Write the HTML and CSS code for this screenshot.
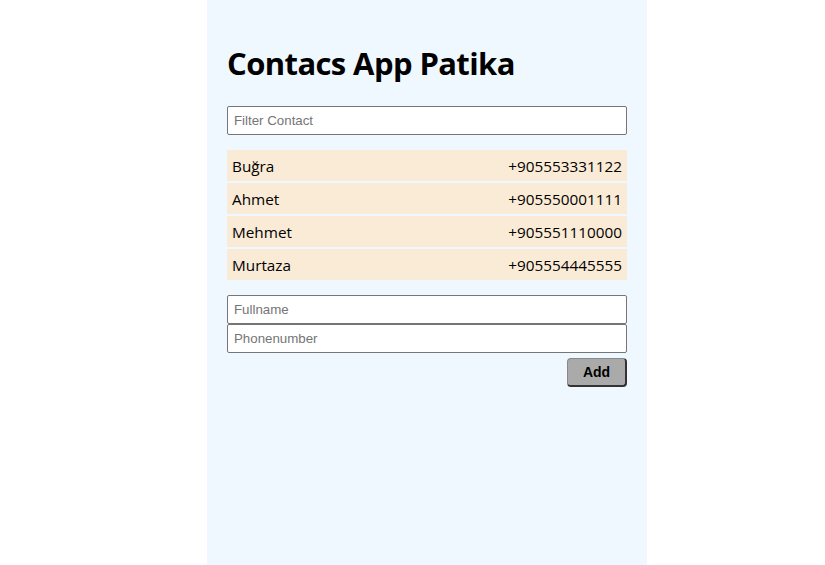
FILE: index.html
```html
<!DOCTYPE html>
<html lang="tr">
<head>
<meta charset="utf-8">
<title>Contacs App Patika</title>
<link rel="stylesheet" href="styles.css">
</head>
<body>
<div class="container">
  <h1 class="title">Contacs App Patika</h1>
  <input class="field filter" type="text" placeholder="Filter Contact">
  <ul class="list">
    <li class="item"><span>Buğra</span><span>+905553331122</span></li>
    <li class="item"><span>Ahmet</span><span>+905550001111</span></li>
    <li class="item"><span>Mehmet</span><span>+905551110000</span></li>
    <li class="item"><span>Murtaza</span><span>+905554445555</span></li>
  </ul>
  <form class="form">
    <input class="field" type="text" placeholder="Fullname">
    <input class="field" type="text" placeholder="Phonenumber">
    <div class="actions"><button class="btn" type="button">Add</button></div>
  </form>
</div>
</body>
</html>
```
FILE: styles.css
```css
html, body {
  margin: 0;
  padding: 0;
  background: #ffffff;
  height: 100%;
}
body {
  font-family: "Open Sans", "Noto Sans", sans-serif;
  padding-left: 29px;
  box-sizing: border-box;
}
.container {
  margin: 0 auto;
  padding: 20px 20px 20px;
  min-height: 100%;
  box-sizing: border-box;
  width: 440px;
  background: #f0f8ff;
  display: flex;
  flex-direction: column;
}
.title {
  font-size: 31px;
  font-weight: 700;
  margin: 21px 0 21px;
  line-height: 44px;
  letter-spacing: -0.6px;
}
.field {
  display: block;
  width: 100%;
  box-sizing: border-box;
  height: 29px;
  border: 1px solid #767676;
  border-radius: 2px;
  background: #fff;
  padding: 0 6px;
  font-family: "Liberation Sans", Arial, sans-serif;
  font-size: 13.3px;
  color: #000;
}
.field::placeholder {
  color: #757575;
}
.list {
  list-style: none;
  margin: 15px 0 15px;
  padding: 0;
  display: flex;
  flex-direction: column;
  gap: 2px;
}
.item {
  display: flex;
  justify-content: space-between;
  align-items: center;
  height: 31px;
  padding: 0 5px;
  background: #faebd7;
  font-size: 15.3px;
  color: #000;
}
.form {
  display: flex;
  flex-direction: column;
}
.actions {
  display: flex;
  justify-content: flex-end;
  margin-top: 5px;
}
.btn {
  width: 60px;
  height: 29px;
  background: #aaaaaa;
  border: 1px solid #888;
  border-right: 2px solid #333;
  border-bottom: 2px solid #333;
  border-radius: 4px;
  font-family: "Liberation Sans", Arial, sans-serif;
  font-weight: 700;
  font-size: 14px;
  color: #000;
}
```
